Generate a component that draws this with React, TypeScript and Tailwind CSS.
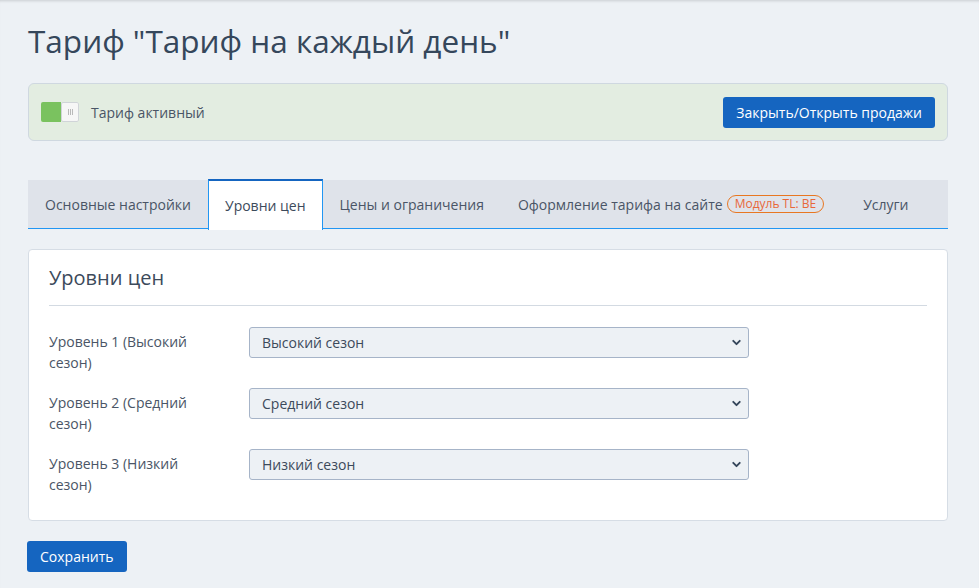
import { ChevronDown } from 'lucide-react';

const tabs = [
  { label: 'Основные настройки' },
  { label: 'Уровни цен', active: true },
  { label: 'Цены и ограничения' },
  { label: 'Оформление тарифа на сайте', badge: 'Модуль TL: BE' },
  { label: 'Услуги' },
];

const levels = [
  { label: 'Уровень 1 (Высокий сезон)', value: 'Высокий сезон' },
  { label: 'Уровень 2 (Средний сезон)', value: 'Средний сезон' },
  { label: 'Уровень 3 (Низкий сезон)', value: 'Низкий сезон' },
];

function Toggle() {
  return (
    <div className="flex h-[20px] w-[38px] overflow-hidden rounded-[2px]">
      <div className="w-[20px] bg-[#7ac25f]" />
      <div className="flex flex-1 items-center justify-center rounded-[2px] border border-[#d0d4d8] bg-[#f6f6f6]">
        <div className="flex gap-[1px]">
          <span className="h-[6px] w-px bg-[#b9b9b9]" />
          <span className="h-[6px] w-px bg-[#b9b9b9]" />
          <span className="h-[6px] w-px bg-[#b9b9b9]" />
        </div>
      </div>
    </div>
  );
}

export default function App() {
  return (
    <div
      className="min-h-[588px] bg-[#edf1f5] pt-[18px] pr-[31px] pb-[17px] pl-[28px] text-[#3c4a5b] shadow-[inset_0_3px_3px_-2px_rgba(0,0,0,0.15)]"
      style={{ fontFamily: '"Open Sans", "Noto Sans", sans-serif' }}
    >
      {/* Title */}
      <h1 className="text-[31.5px] leading-[46px] font-normal text-[#35475b]">
        Тариф "Тариф на каждый день"
      </h1>

      {/* Active alert */}
      <div className="mt-[19px] flex h-[58px] items-center justify-between rounded-[6px] border border-[#cfd8e0] bg-[#e3ede1] pr-[12px] pl-[12px]">
        <div className="flex items-center gap-[12px]">
          <Toggle />
          <span className="text-[14px] text-[#4a5566]">Тариф активный</span>
        </div>
        <button className="h-[31px] rounded-[3px] bg-[#1565c0] px-[13px] text-[14px] text-white">
          Закрыть/Открыть продажи
        </button>
      </div>

      {/* Tabs */}
      <div className="mt-[39px] flex h-[49px] border-b-[1.5px] border-[#2196f3] bg-[#dfe3ea]">
        {tabs.map((t) => (
          <div
            key={t.label}
            className={
              t.active
                ? 'relative -mt-px -mb-[1.5px] flex items-center border-x border-t-2 border-x-[#2196f3] border-t-[#1565c0] bg-white px-[16px] text-[14px] text-[#3c4a5b]'
                : 'flex items-center px-[17px] text-[14px] text-[#4a5566]'
            }
          >
            {t.label}
            {t.badge && (
              <span className="mr-[5px] ml-[4px] rounded-full border border-[#e87722] px-[7px] text-[12px] leading-[16px] text-[#e8683a]">
                {t.badge}
              </span>
            )}
          </div>
        ))}
      </div>

      {/* Card */}
      <div className="mt-[20px] rounded-[4px] border border-[#d6dde5] bg-white px-[20px] pt-[14px] pb-[25px]">
        <h2 className="text-[20px] leading-[28px] font-normal text-[#3c4a5b]">Уровни цен</h2>
        <div className="mt-[13px] border-t border-[#d3dae2]" />
        <div className="mt-[21px] flex flex-col gap-[15px]">
          {levels.map((l) => (
            <div key={l.label} className="flex items-start">
              <div className="w-[200px] pt-[4px] pr-[50px] text-[14px] leading-[21px] text-[#4a5566]">
                {l.label}
              </div>
              <div className="flex h-[31px] w-[500px] items-center justify-between rounded-[3px] border border-[#a6b4c8] bg-[#edf1f5] pr-[5px] pl-[12px] text-[14px] text-[#3c4a5b]">
                <span>{l.value}</span>
                <ChevronDown size={13} strokeWidth={3.5} className="text-[#34455a]" />
              </div>
            </div>
          ))}
        </div>
      </div>

      {/* Save */}
      <button className="mt-[20px] -ml-px h-[31px] rounded-[3px] bg-[#1565c0] px-[13px] text-[14px] text-white">
        Сохранить
      </button>
    </div>
  );
}
